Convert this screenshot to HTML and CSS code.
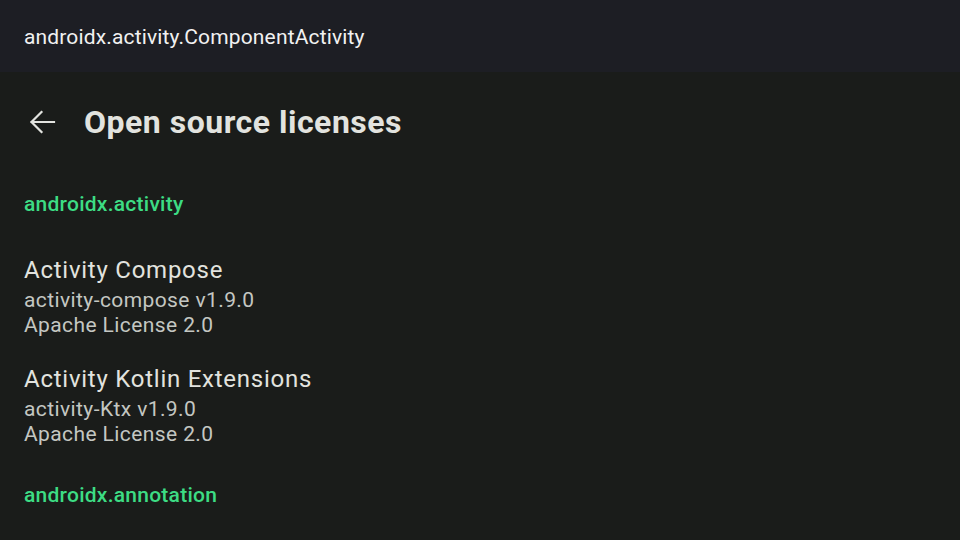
FILE: index.html
```html
<!DOCTYPE html>
<html>
<head>
<meta charset="utf-8">
<link rel="stylesheet" href="styles.css">
</head>
<body>
<div class="appbar">androidx.activity.ComponentActivity</div>
<div class="content">
  <div class="toolbar">
    <svg class="back" width="36" height="36" viewBox="0 0 36 36"><path d="M30 18H7.5M17.5 8L7.5 18L17.5 28" fill="none" stroke="#e2e3df" stroke-width="2.2" stroke-linecap="square"/></svg>
    <h1 class="title">Open source licenses</h1>
  </div>
  <div class="section">androidx.activity</div>
  <div class="item">
    <div class="name">Activity Compose</div>
    <div class="sub">activity-compose v1.9.0</div>
    <div class="sub">Apache License 2.0</div>
  </div>
  <div class="item">
    <div class="name">Activity Kotlin Extensions</div>
    <div class="sub">activity-Ktx v1.9.0</div>
    <div class="sub">Apache License 2.0</div>
  </div>
  <div class="section">androidx.annotation</div>
</div>
</body>
</html>
```
FILE: styles.css
```css
html, body {
  margin: 0;
  padding: 0;
  height: 100%;
  overflow: hidden;
}
body {
  background: #1a1c1a;
  font-family: Roboto, "Noto Sans", sans-serif;
}
.appbar {
  height: 72px;
  background: #1d1e24;
  color: #f1f1f1;
  font-size: 21px;
  letter-spacing: 0.15px;
  line-height: 74px;
  padding-left: 24px;
}
.content {
  padding: 0 24px;
}
.toolbar {
  display: flex;
  align-items: center;
  height: 100px;
  gap: 24px;
}
.back {
  flex: none;
}
.title {
  margin: 0;
  font-size: 32px;
  font-weight: 700;
  letter-spacing: 0.5px;
  color: #e2e3df;
}
.section {
  color: #3ddc84;
  font-size: 21px;
  font-weight: 500;
  letter-spacing: 0.25px;
  line-height: 24px;
  padding-top: 20px;
  padding-bottom: 37px;
}
.item {
  padding-bottom: 16px;
}
.item + .item {
  padding-top: 8px;
}
.name {
  color: #e2e3df;
  font-size: 24px;
  letter-spacing: 0.75px;
  line-height: 35px;
}
.sub {
  color: #c4c7c2;
  font-size: 21px;
  letter-spacing: 0.4px;
  line-height: 25px;
}
```
